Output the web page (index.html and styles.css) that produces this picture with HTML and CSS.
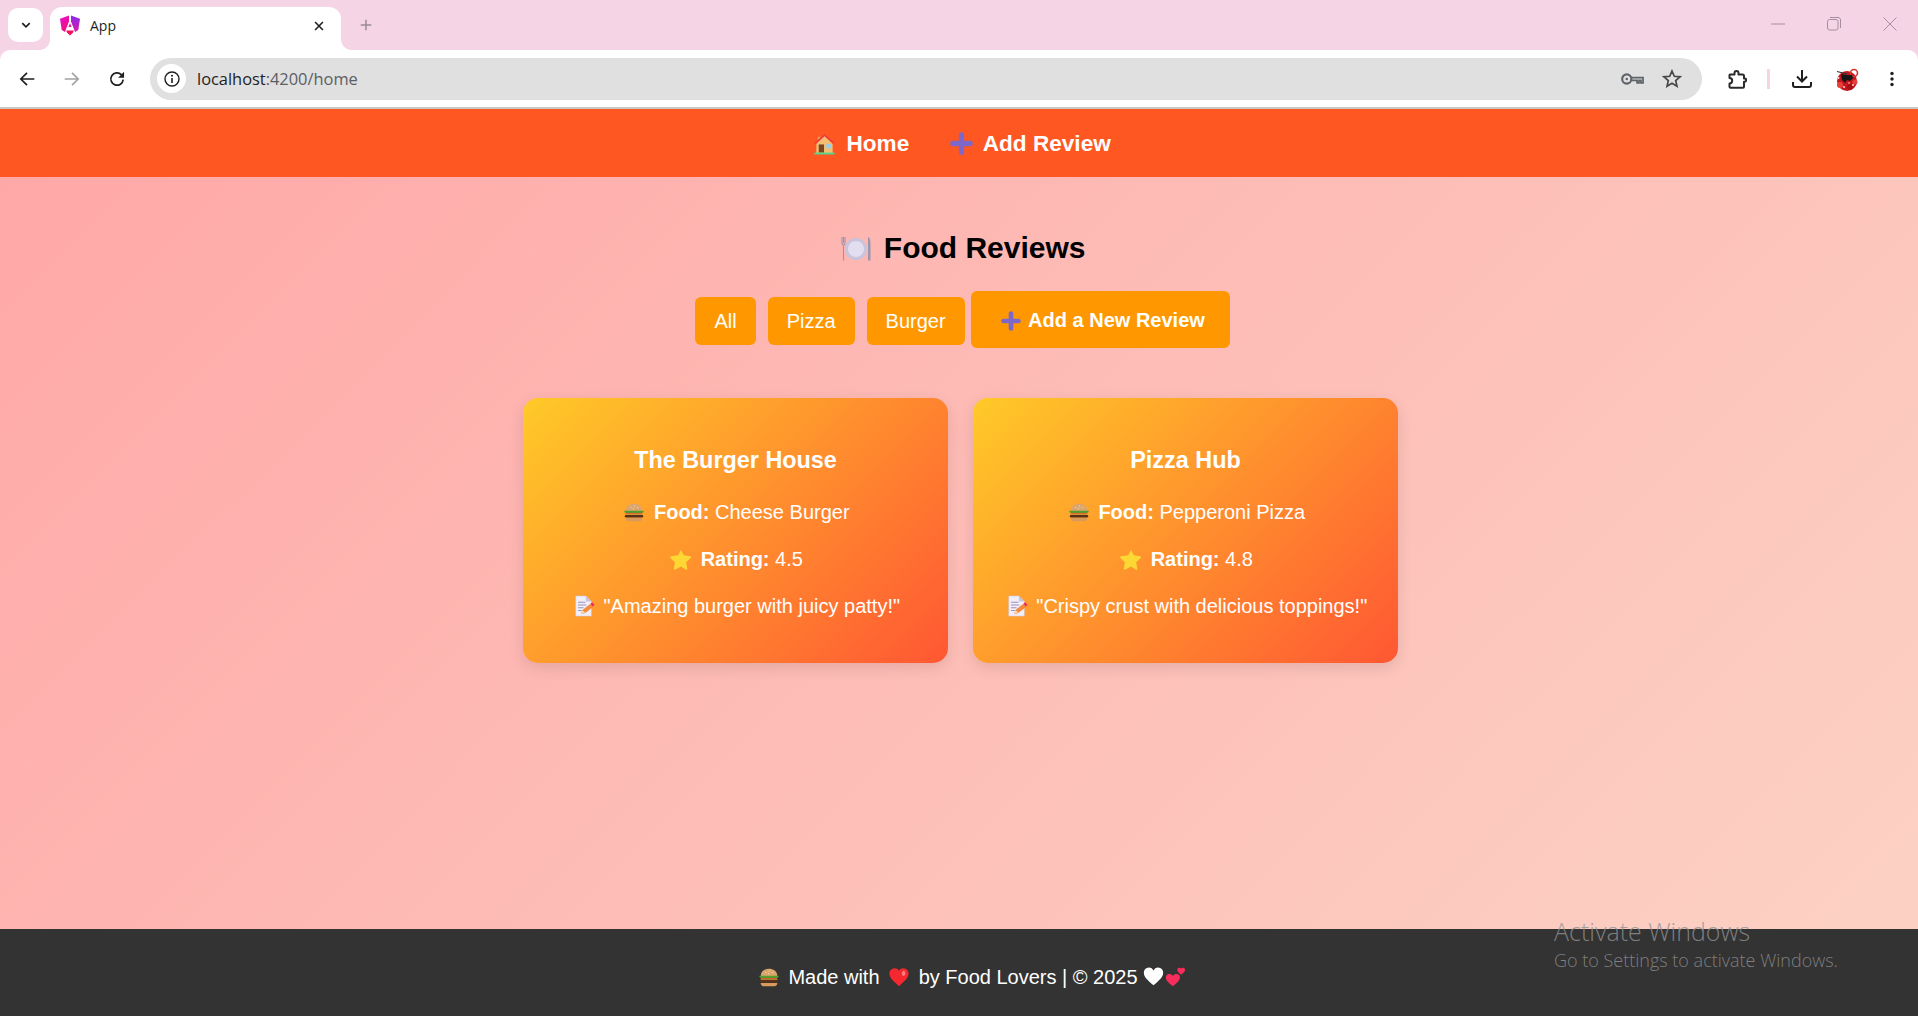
FILE: index.html
```html
<!DOCTYPE html>
<html lang="en">
<head>
  <meta charset="UTF-8">
  <title>App</title>
  <link rel="stylesheet" href="styles.css">
</head>
<body>
<svg class="defs" aria-hidden="true">
  <defs>
    <linearGradient id="ngL" x1="0" y1="0" x2="0.6" y2="1"><stop offset="0" stop-color="#e40dd8"/><stop offset="1" stop-color="#f5127a"/></linearGradient>
    <linearGradient id="ngR" x1="0" y1="0" x2="0" y2="1"><stop offset="0" stop-color="#8a2bf0"/><stop offset="1" stop-color="#d81ba0"/></linearGradient>
    <symbol id="plus" viewBox="0 0 24 24">
      <path d="M12 3v18M3 12h18" stroke="#7d68c9" stroke-width="5.600" stroke-linecap="round" fill="none"/>
    </symbol>
    <symbol id="burger" viewBox="0 0 24 24">
      <path d="M3 11C3 5.500 7.500 3 12 3s9 2.500 9 8z" fill="#dba66e"/>
      <path d="M8 7h1M12 5.500h1M15.500 7h1M11 8.500h1" stroke="#f6e3c0" stroke-width="1"/>
      <path d="M1.500 10.500h21v1.500l-2 1.300H3.500L1.500 12z" fill="#4f9e2f"/>
      <rect x="3" y="13" width="18" height="1" fill="#e8452c"/>
      <rect x="3" y="14" width="18" height="1" fill="#f7c233"/>
      <rect x="2" y="15" width="20" height="3" rx="1.500" fill="#57311d"/>
      <path d="M3 18.500h18v.5c0 1.500-1.500 3-3 3H6c-1.500 0-3-1.500-3-3z" fill="#d99a5c"/>
    </symbol>
    <symbol id="star" viewBox="0 0 24 24">
      <path d="M12 2l3 6 6.800 1c1 .1 1.400 1.200.7 1.900l-4.900 4.700 1.200 6.700c.2 1-.8 1.700-1.600 1.200L12 20.300l-6.200 3.200c-.8.500-1.800-.2-1.600-1.200l1.200-6.700-4.900-4.700c-.7-.7-.3-1.800.7-1.900L9 8z" fill="#fdd835"/>
    </symbol>
    <symbol id="memo" viewBox="0 0 24 24">
      <path d="M3 1h11l6 6v16H3z" fill="#f3effa" stroke="#c9c4dc" stroke-width=".6"/>
      <path d="M14 1v6h6z" fill="#c9c4dc"/>
      <path d="M5.500 8h8M5.500 11h9M5.500 14h6M5.500 17h4" stroke="#9a94b8" stroke-width="1.100"/>
      <path d="M9 21l1-4.500 9-7 3 3.500-9 7z" fill="#f58a3c"/>
      <path d="M19 9.500l2-1.600 2.500 3-2 1.700z" fill="#f0285f"/>
      <path d="M9 21l1-4.500 3.500 2.500z" fill="#f7d9b0"/>
    </symbol>
  </defs>
</svg>

<div class="tabstrip">
  <div class="tab-search">
    <svg viewBox="0 0 16 16" class="ico-12"><path d="M3 5.500l5 5 5-5" stroke="#1f1f1f" stroke-width="2.200" fill="none"/></svg>
  </div>
  <div class="tab">
    <svg class="favicon" viewBox="0 0 20 21">
      <path d="M9 0.500L0 3.800 1.700 15 5 16.900 9 6.500z" fill="url(#ngL)"/>
      <path d="M11 0.500L20 3.800 18.300 15 15 16.900 11 6.500z" fill="url(#ngR)"/>
      <path d="M10 5.500l3.400 8.500H6.600z" fill="#fff" stroke="#fff" stroke-width=".1"/>
      <path d="M10 8l1.600 4H8.400z" fill="#e81b9b"/>
      <path d="M6.200 15.500h7.600l-.9 2.200L10 20.500l-2.900-2.800z" fill="#f0125f"/>
    </svg>
    <span class="tab-title">App</span>
    <svg viewBox="0 0 16 16" class="tab-close"><path d="M3.500 3.500l9 9M12.500 3.500l-9 9" stroke="#1f1f1f" stroke-width="1.800"/></svg>
  </div>
  <svg viewBox="0 0 16 16" class="newtab"><path d="M8 2v12M2 8h12" stroke="#9a8a96" stroke-width="1.700"/></svg>
  <div class="winbtns">
    <svg viewBox="0 0 14 14" class="winbtn"><path d="M0 7h14" stroke="#a58f9e" stroke-width="1"/></svg>
    <svg viewBox="0 0 14 14" class="winbtn"><rect x=".5" y="2.500" width="10.500" height="10.500" rx="2" fill="none" stroke="#a58f9e"/><path d="M3 .5h8c1.500 0 2.500 1 2.500 2.500v8" fill="none" stroke="#a58f9e"/></svg>
    <svg viewBox="0 0 14 14" class="winbtn"><path d="M.5.500l13 13M13.500.500l-13 13" stroke="#a58f9e"/></svg>
  </div>
</div>

<div class="toolbar">
  <svg viewBox="0 0 16 16" class="tool"><path d="M14.500 8H2.500M8 2.500L2.500 8 8 13.500" stroke="#1f1f1f" stroke-width="1.500" fill="none"/></svg>
  <svg viewBox="0 0 16 16" class="tool"><path d="M1.500 8h12M8 2.500L13.500 8 8 13.500" stroke="#a3a3a3" stroke-width="1.500" fill="none"/></svg>
  <svg viewBox="0 0 16 16" class="tool"><path d="M13.500 8.500a5.500 5.500 0 1 1-1.600-4.400L13.500 5.700" stroke="#1f1f1f" stroke-width="1.500" fill="none"/><path d="M14.300 1.500v5.300H9z" fill="#1f1f1f"/></svg>
  <div class="omnibox">
    <div class="site-info">
      <svg viewBox="0 0 16 16" class="ico-16"><circle cx="8" cy="8" r="7" fill="none" stroke="#1f1f1f" stroke-width="1.400"/><path d="M8 7v5" stroke="#1f1f1f" stroke-width="1.600"/><circle cx="8" cy="4.800" r="1" fill="#1f1f1f"/></svg>
    </div>
    <div class="url">localhost<span class="url-rest">:4200/home</span></div>
    <svg viewBox="0 0 24 14" class="key"><circle cx="6" cy="7" r="4.800" fill="none" stroke="#5f6368" stroke-width="2.200"/><circle cx="6" cy="7" r="1.300" fill="#5f6368"/><path d="M11 5.500H23v5.500h-2.200V8.500h-2v2.500h-2V8.500H11" fill="none" stroke="#5f6368" stroke-width="1.800"/></svg>
    <svg viewBox="0 0 20 20" class="star-btn"><path d="M10 2l2.300 5.300 5.700.5-4.300 3.800 1.300 5.600-5-3-5 3 1.300-5.600L2 7.800l5.700-.5z" fill="none" stroke="#474747" stroke-width="1.700"/></svg>
  </div>
  <svg viewBox="0 0 20 20" class="ext"><path d="M3 5.500h4.500V4a2 2 0 0 1 4 0v1.500h4a1.500 1.500 0 0 1 1.500 1.500v2.500h.6a1.600 1.600 0 0 1 0 3.200H17v5a1 1 0 0 1-1 1H3.500a1 1 0 0 1-1-1V14.500a2.700 2.700 0 0 0 0-5.400V6a.5.5 0 0 1 .5-.5z" fill="none" stroke="#2a2a2a" stroke-width="2" stroke-linejoin="round"/></svg>
  <span class="tool-sep"></span>
  <svg viewBox="0 0 20 20" class="dl"><path d="M10 1v11M5 7.500l5 5 5-5" fill="none" stroke="#1f1f1f" stroke-width="2"/><path d="M1 13v3c0 1.200.8 2 2 2h14c1.200 0 2-.8 2-2v-3" fill="none" stroke="#1f1f1f" stroke-width="2"/></svg>
  <svg viewBox="0 0 24 24" class="avatar">
    <circle cx="12" cy="14" r="10" fill="#c4161c"/>
    <circle cx="19" cy="6" r="3.500" fill="none" stroke="#d9352f" stroke-width="1.600"/>
    <circle cx="5" cy="18" r="3" fill="#e8403a"/><circle cx="15" cy="20" r="3" fill="#a80f15"/><circle cx="20" cy="15" r="2.500" fill="#e8403a"/>
    <path d="M6 7l6 1h5l1 3-3 3-3-1-2 3-3-3z" fill="#161616"/>
    <path d="M2 4.500l10 2.500" stroke="#333" stroke-width="1.200"/>
    <circle cx="3.500" cy="11" r="1" fill="#f4d6d6"/><circle cx="9" cy="20" r="1" fill="#f4d6d6"/><circle cx="18" cy="18" r="1" fill="#f4d6d6"/><circle cx="14" cy="16" r="1" fill="#f08080"/>
  </svg>
  <svg viewBox="0 0 16 16" class="menu"><circle cx="8" cy="2.500" r="1.700" fill="#1f1f1f"/><circle cx="8" cy="8" r="1.700" fill="#1f1f1f"/><circle cx="8" cy="13.500" r="1.700" fill="#1f1f1f"/></svg>
</div>

<div class="page">
  <nav class="navbar">
    <a class="nav-link">
      <svg viewBox="0 0 24 24" class="emoji-nav">
        <path d="M5 5h3v5H5z" fill="#e8a15a"/>
        <path d="M3.500 11L12 3l8.500 8v11h-17z" fill="#f3bd72"/>
        <path d="M12 2L1.500 11.500l1.300 1.300L12 4.500l9.200 8.300 1.300-1.300z" fill="#ef3b3b"/>
        <rect x="6" y="13" width="5.500" height="8.500" fill="#7a4526"/>
        <rect x="14" y="12.500" width="4.500" height="4.500" fill="#8fd0f5"/>
        <rect x="1.500" y="21.500" width="21" height="2" fill="#55d68a"/>
      </svg>
      Home
    </a>
    <a class="nav-link"><svg class="emoji-nav"><use href="#plus"/></svg> Add Review</a>
  </nav>

  <main class="content">
    <h2 class="page-title">
      <svg viewBox="0 0 30 26" class="emoji-title">
        <circle cx="15" cy="13" r="11" fill="#c9c3dc"/>
        <circle cx="15" cy="13" r="8" fill="#e2def0"/>
        <path d="M1 1v6M2.500 1v6M4 1v6M1 7c0 1.500 1 2 1.500 2S4 8.500 4 7M2.500 9v15.500" stroke="#9b95ad" stroke-width="1.100" fill="none"/>
        <path d="M27 1c2 0 2.500 4 2.500 8v15.500H27z" fill="#9b95ad"/>
      </svg>
      Food Reviews
    </h2>
    <div class="filters">
      <button class="filter-btn">All</button>
      <button class="filter-btn">Pizza</button>
      <button class="filter-btn">Burger</button>
      <button class="add-btn"><svg class="emoji-add"><use href="#plus"/></svg> Add a New Review</button>
    </div>
    <div class="cards">
      <div class="card">
        <h3>The Burger House</h3>
        <p><svg class="emoji"><use href="#burger"/></svg> <strong>Food:</strong> Cheese Burger</p>
        <p><svg class="emoji"><use href="#star"/></svg> <strong>Rating:</strong> 4.5</p>
        <p><svg class="emoji"><use href="#memo"/></svg> "Amazing burger with juicy patty!"</p>
      </div>
      <div class="card">
        <h3>Pizza Hub</h3>
        <p><svg class="emoji"><use href="#burger"/></svg> <strong>Food:</strong> Pepperoni Pizza</p>
        <p><svg class="emoji"><use href="#star"/></svg> <strong>Rating:</strong> 4.8</p>
        <p><svg class="emoji"><use href="#memo"/></svg> "Crispy crust with delicious toppings!"</p>
      </div>
    </div>
  </main>

  <footer class="footer">
    <p>
      <svg class="emoji"><use href="#burger"/></svg> Made with
      <svg viewBox="0 0 24 24" class="emoji heart"><path d="M12 22C5 16 1.500 12.500 1.500 8A5.800 5.800 0 0 1 12 5a5.800 5.800 0 0 1 10.500 3c0 4.500-3.500 8-10.500 14z" fill="#f4282f"/><ellipse cx="17" cy="8" rx="2" ry="2.800" fill="#ff7b7b"/></svg>
      by Food Lovers | © 2025
      <svg viewBox="0 0 24 24" class="emoji-tail"><path d="M12 22C5 16 1 12.500 1 8A5.800 5.800 0 0 1 12 5a5.800 5.800 0 0 1 11 3c0 4.500-4 8-11 14z" fill="#fff"/></svg><svg viewBox="0 0 24 24" class="emoji-tail"><path d="M9 23C3 18.500 1 16 1 13.500A4.200 4.200 0 0 1 9 11.500a4.200 4.200 0 0 1 8 2c0 2.500-2 5-8 9.500z" fill="#f92d5c"/><path d="M18.500 10C15.500 7.500 14 6 14 4.300A2.500 2.500 0 0 1 18.500 3 2.500 2.500 0 0 1 23 4.300c0 1.700-1.500 3.200-4.500 5.700z" fill="#f92d5c"/></svg>
    </p>
  </footer>

  <div class="activate">
    <div class="activate-big">Activate Windows</div>
    <div class="activate-small">Go to Settings to activate Windows.</div>
  </div>
</div>
</body>
</html>
```

FILE: styles.css
```css
* {
  box-sizing: border-box;
  margin: 0;
  padding: 0;
}

html, body {
  height: 100%;
  overflow: hidden;
}

body {
  display: flex;
  flex-direction: column;
  font-family: "Liberation Sans", Arial, sans-serif;
  background: #f5d5e5;
}

.defs {
  position: absolute;
  width: 0;
  height: 0;
}

/* browser chrome */
.tabstrip {
  height: 50px;
  flex: none;
  display: flex;
  align-items: flex-end;
}

.tab-search {
  width: 35px;
  height: 34px;
  margin: 0 7px 8px 8px;
  border-radius: 10px;
  background: #fff;
  display: flex;
  align-items: center;
  justify-content: center;
}

.ico-12 {
  width: 12px;
  height: 12px;
}

.ico-16 {
  width: 16px;
  height: 16px;
}

.tab {
  width: 291px;
  height: 43px;
  background: #fff;
  border-radius: 12px 12px 0 0;
  display: flex;
  align-items: center;
  padding: 0 15px 6px 10px;
  position: relative;
}

.tab::before,
.tab::after {
  content: "";
  position: absolute;
  bottom: 0;
  width: 10px;
  height: 10px;
}

.tab::before {
  left: -10px;
  background: radial-gradient(circle at 0 0, #f5d5e5 9.500px, #fff 10px);
}

.tab::after {
  right: -10px;
  background: radial-gradient(circle at 100% 0, #f5d5e5 9.500px, #fff 10px);
}

.favicon {
  width: 20px;
  height: 21px;
}

.tab-title {
  margin-left: 10px;
  flex: 1;
  font: 14px "Open Sans", "Liberation Sans", sans-serif;
  color: #1f1f1f;
}

.tab-close {
  width: 14px;
  height: 14px;
}

.newtab {
  width: 14px;
  height: 14px;
  margin: 0 0 18px 18px;
  align-self: flex-end;
}

.winbtns {
  margin-left: auto;
  margin-bottom: 19px;
  margin-right: 21px;
  display: flex;
  gap: 42px;
}

.winbtn {
  width: 14px;
  height: 14px;
}

.toolbar {
  height: 57px;
  flex: none;
  display: flex;
  align-items: center;
  background: #fff;
  border-radius: 10px 10px 0 0;
  padding-left: 18px;
}

.tool {
  width: 18px;
  height: 18px;
  margin-right: 27px;
}

.toolbar .tool:nth-child(3) {
  margin-right: 0;
}

.omnibox {
  width: 1552px;
  height: 42px;
  margin-left: 24px;
  border-radius: 21px;
  background: #e0e0e0;
  display: flex;
  align-items: center;
  padding-left: 7px;
}

.site-info {
  width: 29px;
  height: 29px;
  border-radius: 50%;
  background: #fff;
  display: flex;
  align-items: center;
  justify-content: center;
}

.url {
  flex: 1;
  margin-left: 11px;
  font: 16.400px "Open Sans", "Liberation Sans", sans-serif;
  color: #1f1f1f;
}

.url-rest {
  color: #5b5e63;
}

.key {
  width: 23px;
  height: 14px;
  margin-right: 18px;
}

.star-btn {
  width: 20px;
  height: 20px;
  margin-right: 20px;
}

.ext {
  width: 20px;
  height: 20px;
  margin-left: 25px;
}

.tool-sep {
  width: 3px;
  height: 20px;
  margin-left: 20px;
  background: #f5d5e5;
}

.dl {
  width: 20px;
  height: 20px;
  margin-left: 22px;
}

.avatar {
  width: 24px;
  height: 24px;
  margin-left: 23px;
}

.menu {
  width: 16px;
  height: 16px;
  margin-left: 25px;
}

/* app */
.page {
  flex: 1;
  display: flex;
  flex-direction: column;
  position: relative;
  border-top: 2px solid #c8c8c8;
  min-height: 0;
}

.navbar {
  height: 68px;
  flex: none;
  display: flex;
  align-items: center;
  justify-content: center;
  gap: 41px;
  padding: 2px 0 0 6px;
  background: #ff5722;
}

.nav-link {
  color: #fff;
  font-size: 22.600px;
  font-weight: bold;
  white-space: nowrap;
}

.emoji-nav {
  width: 23px;
  height: 23px;
  vertical-align: -4px;
  margin-right: 4px;
}

.content {
  flex: 1;
  background: linear-gradient(135deg, #ffa8a8, #fcd1c4);
  text-align: center;
  padding-top: 51px;
}

.page-title {
  font-size: 30px;
  line-height: 40px;
  padding-left: 9px;
  color: #000;
}

.emoji-title {
  width: 30px;
  height: 26px;
  vertical-align: -4px;
  margin-right: 4px;
}

.filters {
  margin-top: 23px;
  display: flex;
  align-items: center;
  justify-content: center;
  padding-left: 7px;
}

.filter-btn {
  height: 48px;
  padding: 0 19px;
  margin: 3px 12px 0 0;
  border: 0;
  border-radius: 6px;
  background: #ff9800;
  color: #fff;
  font-family: inherit;
  font-size: 20px;
}

.filters .filter-btn:nth-child(3) {
  margin-right: 6px;
}

.add-btn {
  height: 57px;
  width: 259px;
  padding: 2px 0 0 6px;
  border: 0;
  border-radius: 6px;
  background: #ff9800;
  color: #fff;
  font-family: inherit;
  font-size: 20px;
  font-weight: bold;
}

.emoji-add {
  width: 20px;
  height: 20px;
  vertical-align: -4px;
  margin-right: 2px;
}

.cards {
  margin-top: 50px;
  display: flex;
  justify-content: center;
  gap: 25px;
  padding-left: 3px;
}

.card {
  width: 425px;
  height: 265px;
  border-radius: 15px;
  background: linear-gradient(135deg, #ffca28, #ff5733);
  box-shadow: 0 5px 15px rgba(0, 0, 0, 0.1);
  color: #fff;
  padding-top: 47px;
}

.card h3 {
  font-size: 23.400px;
  line-height: 30px;
  margin-bottom: 25px;
}

.card p {
  font-size: 20px;
  line-height: 24px;
  margin-bottom: 23px;
  padding-left: 2px;
}

.emoji {
  width: 22px;
  height: 22px;
  vertical-align: -4px;
  margin-right: 3px;
}

.heart {
  margin-left: 3px;
}

.footer {
  height: 87px;
  flex: none;
  display: flex;
  align-items: center;
  justify-content: center;
  padding: 10px 0 0 27px;
  background: #333;
  color: #fff;
  font-size: 20px;
}

.emoji-tail {
  width: 21px;
  height: 21px;
  vertical-align: -3px;
  margin-right: 1px;
}

.activate {
  position: absolute;
  left: 1554px;
  top: 805px;
  font-family: "Open Sans", sans-serif;
  font-weight: 300;
  color: rgba(146, 146, 146, 0.81);
  pointer-events: none;
}

.activate-big {
  font-size: 25px;
  line-height: 34px;
}

.activate-small {
  font-size: 18px;
  line-height: 24px;
}
```
